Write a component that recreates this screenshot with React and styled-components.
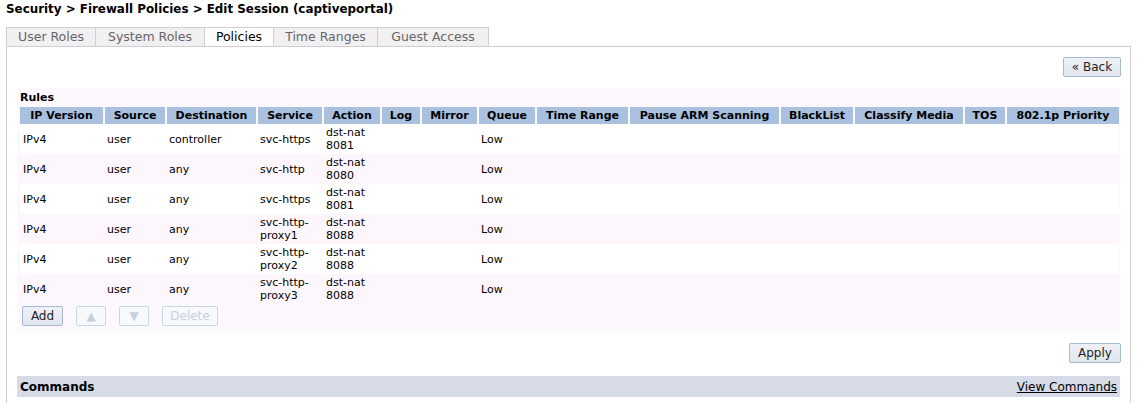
import React from "react"
import styled, { createGlobalStyle } from "styled-components"

const GlobalStyle = createGlobalStyle`
  body {
    margin: 0;
    background: #ffffff;
    font-family: "DejaVu Sans", Verdana, sans-serif;
    font-size: 11px;
    color: #000;
  }
`

const Page = styled.div`
  padding: 0 6px;
`

const Title = styled.h1`
  margin: 0;
  padding-top: 1px;
  height: 26px;
  font-size: 11.9px;
  font-weight: bold;
  line-height: 16px;
`

const TabBar = styled.div`
  display: flex;
  height: 19px;
`

const Tab = styled.div`
  box-sizing: border-box;
  width: ${p => p.w}px;
  height: 19px;
  border: 1px solid #cfcfcf;
  border-left: ${p => (p.first ? "1px solid #cfcfcf" : "none")};
  border-bottom: ${p => (p.active ? "1px solid #fff" : "none")};
  background: ${p => (p.active ? "#fff" : "#f2eff2")};
  color: ${p => (p.active ? "#000" : "#666")};
  font-size: 12.5px;
  line-height: 18px;
  text-align: center;
  white-space: nowrap;
`

const Panel = styled.div`
  border: 1px solid #cfcfcf;
  border-bottom: none;
  padding: 10px 10px 20px;
  min-height: 360px;
  width: 1103px;
`

const TopBar = styled.div`
  display: flex;
  justify-content: flex-end;
  margin-right: -1px;
`

const Button = styled.button`
  box-sizing: border-box;
  height: 20px;
  width: ${p => p.w || 30}px;
  padding: 0;
  font-family: inherit;
  font-size: 12px;
  border: 1px solid ${p => (p.disabled ? "#c8d5e6" : "#a6b9d2")};
  border-radius: 2px;
  background: ${p => (p.disabled ? "#f7f9fc" : "linear-gradient(#eef1f6, #e1e6ee)")};
  color: ${p => (p.disabled ? "#c8d0dc" : "#222")};
  cursor: default;
`

const RulesBox = styled.div`
  margin-top: 11px;
  background: #fdf8fd;
  padding: 1px 3px 5px;
`

const Label = styled.div`
  font-weight: bold;
  line-height: 18px;
`

const Table = styled.table`
  border-collapse: collapse;
  table-layout: fixed;
  width: 1099px;
`

const Th = styled.th`
  background: #a9c1de;
  border-right: 2px solid #fdf8fd;
  height: 17px;
  padding: 0;
  font-size: 11px;
  font-weight: bold;
  text-align: center;
  white-space: nowrap;
  &:last-child {
    border-right: none;
  }
`

const Tr = styled.tr`
  background: ${p => (p.odd ? "#ffffff" : "#fdf7fd")};
`

const Td = styled.td`
  height: 30px;
  padding: 0 3px;
  line-height: 13px;
  vertical-align: middle;
  word-wrap: break-word;
`

const ButtonRow = styled.div`
  display: flex;
  gap: 13px;
  padding: 2px 0 0 2px;
`

const ApplyBar = styled.div`
  display: flex;
  justify-content: flex-end;
  margin-top: 12px;
  margin-right: -1px;
`

const CommandsBar = styled.div`
  display: flex;
  justify-content: space-between;
  align-items: center;
  margin-top: 13px;
  height: 21px;
  padding: 0 3px;
  background: #d6dbe7;
  font-size: 12px;
`

const Bold = styled.span`
  font-weight: bold;
`

const Link = styled.a`
  color: #000;
  text-decoration: underline;
`

const columns = [
  ["IP Version", 84],
  ["Source", 62],
  ["Destination", 91],
  ["Service", 66],
  ["Action", 58],
  ["Log", 40],
  ["Mirror", 57],
  ["Queue", 58],
  ["Time Range", 93],
  ["Pause ARM Scanning", 151],
  ["BlackList", 74],
  ["Classify Media", 110],
  ["TOS", 42],
  ["802.1p Priority", 113],
]

const rules = [
  ["IPv4", "user", "controller", "svc-https", "dst-nat 8081"],
  ["IPv4", "user", "any", "svc-http", "dst-nat 8080"],
  ["IPv4", "user", "any", "svc-https", "dst-nat 8081"],
  ["IPv4", "user", "any", "svc-http-proxy1", "dst-nat 8088"],
  ["IPv4", "user", "any", "svc-http-proxy2", "dst-nat 8088"],
  ["IPv4", "user", "any", "svc-http-proxy3", "dst-nat 8088"],
]

const tabs = [
  ["User Roles", 90],
  ["System Roles", 109],
  ["Policies", 69],
  ["Time Ranges", 104],
  ["Guest Access", 111],
]

export default function App() {
  return (
    <Page>
      <GlobalStyle />
      <Title>Security &gt; Firewall Policies &gt; Edit Session (captiveportal)</Title>
      <TabBar>
        {tabs.map(([t, w], i) => (
          <Tab key={t} w={w} first={i === 0} active={t === "Policies"}>
            {t}
          </Tab>
        ))}
      </TabBar>
      <Panel>
        <TopBar>
          <Button w={58}>« Back</Button>
        </TopBar>
        <RulesBox>
          <Label>Rules</Label>
          <Table>
            <colgroup>
              {columns.map(([name, w]) => (
                <col key={name} style={{ width: w }} />
              ))}
            </colgroup>
            <thead>
              <tr>
                {columns.map(([name]) => (
                  <Th key={name}>{name}</Th>
                ))}
              </tr>
            </thead>
            <tbody>
              {rules.map((r, i) => (
                <Tr key={i} odd={i % 2 === 0}>
                  {r.map((v, j) => (
                    <Td key={j}>{v}</Td>
                  ))}
                  <Td />
                  <Td />
                  <Td>Low</Td>
                  <Td />
                  <Td />
                  <Td />
                  <Td />
                  <Td />
                  <Td />
                </Tr>
              ))}
            </tbody>
          </Table>
          <ButtonRow>
            <Button w={41}>Add</Button>
            <Button w={30} disabled>▲</Button>
            <Button w={30} disabled>▼</Button>
            <Button w={56} disabled>Delete</Button>
          </ButtonRow>
        </RulesBox>
        <ApplyBar>
          <Button w={52}>Apply</Button>
        </ApplyBar>
        <CommandsBar>
          <Bold>Commands</Bold>
          <Link>View Commands</Link>
        </CommandsBar>
      </Panel>
    </Page>
  )
}
